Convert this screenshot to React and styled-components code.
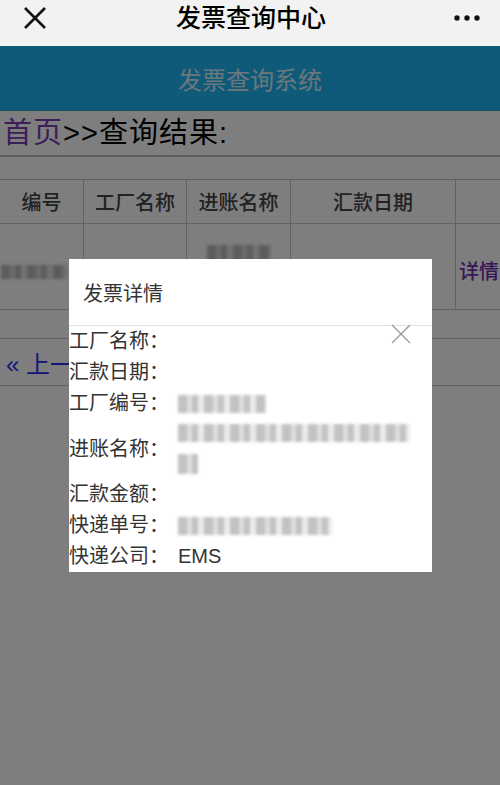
import React from 'react'
import styled, { createGlobalStyle } from 'styled-components'

const GlobalStyle = createGlobalStyle`
  body {
    margin: 0;
    background: #fff;
    font-family: "Liberation Sans", "Noto Sans CJK SC", sans-serif;
  }
`

const Screen = styled.div`
  width: 500px;
  height: 785px;
  overflow: hidden;
  display: flex;
  flex-direction: column;
`

const TopBar = styled.div`
  height: 46px;
  flex: none;
  background: #f2f2f2;
  display: flex;
  align-items: center;
  justify-content: space-between;
  padding: 0 18px 0 20px;
  box-sizing: border-box;
`

const TopTitle = styled.div`
  font-size: 25px;
  font-weight: 500;
  color: #000;
  line-height: 1;
  margin-top: -10px;
`

const IconBtn = styled.div`
  width: 30px;
  height: 30px;
  display: flex;
  align-items: center;
  justify-content: center;
  margin-top: -10px;
`

const Content = styled.div`
  position: relative;
  flex: 1;
  background: #fcfcfe;
`

const Banner = styled.div`
  height: 64px;
  background: #1cb4f0;
  border-bottom: 1px solid #2a9ccc;
  display: flex;
  align-items: center;
  justify-content: center;
  font-size: 24px;
  color: rgba(255, 255, 255, 0.82);
`

const Crumb = styled.div`
  font-size: 29px;
  letter-spacing: 1px;
  line-height: 44px;
  padding-left: 3px;
  color: #000;
  border-bottom: 2px solid #bcbcbc;
`

const CrumbLink = styled.span`
  color: ${p => p.color || '#7a3cb4'};
`

const Table = styled.table`
  margin-top: 22px;
  width: 520px;
  border-collapse: collapse;
  table-layout: fixed;
  font-size: 20px;
`

const Th = styled.th`
  width: ${p => p.w}px;
  height: 43px;
  border: 1px solid #c4c4c4;
  border-left: ${p => (p.first ? 'none' : '1px solid #c4c4c4')};
  color: #444;
  font-weight: 500;
  padding: 0;
  text-align: center;
`

const Td = styled.td`
  height: 85px;
  border: 1px solid #c4c4c4;
  border-left: ${p => (p.first ? 'none' : '1px solid #c4c4c4')};
  padding: 0;
  text-align: center;
  vertical-align: middle;
`

const DetailLink = styled.span`
  display: block;
  text-align: left;
  padding-left: 3px;
  color: #6e2fb0;
  font-weight: 500;
  margin-top: 8px;
`

const Blur = styled.div`
  display: inline-block;
  vertical-align: middle;
  width: ${p => p.w}px;
  height: ${p => p.h || 16}px;
  background: repeating-linear-gradient(
    90deg,
    ${p => p.c1 || '#b9b9b9'} 0 9px,
    ${p => p.c2 || '#d8d8d8'} 9px 14px,
    ${p => p.c1 || '#b9b9b9'} 14px 20px,
    ${p => p.c3 || '#e6e6e6'} 20px 26px
  );
  filter: blur(1.6px);
`

const Pager = styled.div`
  margin-top: 28px;
  height: 46px;
  border-top: 1px solid #c4c4c4;
  border-bottom: 1px solid #c4c4c4;
  display: flex;
  align-items: center;
  padding-left: 6px;
  font-size: 24px;
  color: #2a2af0;
`

const Overlay = styled.div`
  position: absolute;
  inset: 0;
  background: rgba(0, 0, 0, 0.5);
`

const Modal = styled.div`
  position: absolute;
  left: 69px;
  top: 213px;
  width: 363px;
  background: #fff;
`

const ModalHead = styled.div`
  height: 66px;
  border-bottom: 1px solid #e2e2e2;
  display: flex;
  align-items: center;
  padding-left: 14px;
  font-size: 20px;
  color: #333;
`

const Close = styled.div`
  position: absolute;
  right: 21px;
  top: 65px;
  width: 20px;
  height: 20px;
`

const Row = styled.div`
  display: flex;
  align-items: center;
  min-height: 31px;
  font-size: 20px;
  line-height: 31px;
  color: #333;
`

const Label = styled.span`
  flex: none;
  width: 109px;
`

const Value = styled.div`
  display: flex;
  flex-direction: column;
  gap: 12px;
  padding: ${p => (p.multi ? '5px 0' : '0')};
`

const fields = [
  { label: '工厂名称：' },
  { label: '汇款日期：' },
  { label: '工厂编号：', blur: [88] },
  { label: '进账名称：', blur: [232, 20], multi: true },
  { label: '汇款金额：' },
  { label: '快递单号：', blur: [154] },
  { label: '快递公司：', text: 'EMS' },
]

const App = () => {
  return (
    <Screen>
      <GlobalStyle />
      <TopBar>
        <IconBtn>
          <svg width="24" height="24" viewBox="0 0 24 24">
            <path d="M2 2 L22 22 M22 2 L2 22" stroke="#111" strokeWidth="2.6" />
          </svg>
        </IconBtn>
        <TopTitle>发票查询中心</TopTitle>
        <IconBtn>
          <svg width="28" height="8" viewBox="0 0 28 8">
            <circle cx="4" cy="4" r="2.7" fill="#111" />
            <circle cx="14" cy="4" r="2.7" fill="#111" />
            <circle cx="24" cy="4" r="2.7" fill="#111" />
          </svg>
        </IconBtn>
      </TopBar>

      <Content>
        <Banner>发票查询系统</Banner>
        <Crumb>
          <CrumbLink>首页</CrumbLink>&gt;&gt;查询结果:
        </Crumb>

        <Table>
          <thead>
            <tr>
              <Th w={83} first>编号</Th>
              <Th w={102}>工厂名称</Th>
              <Th w={103}>进账名称</Th>
              <Th w={164}>汇款日期</Th>
              <Th w={68}></Th>
            </tr>
          </thead>
          <tbody>
            <tr>
              <Td first>
                <Blur w={66} h={14} style={{ marginTop: 10, marginLeft: -16 }} />
              </Td>
              <Td></Td>
              <Td>
                <Blur w={64} h={18} style={{ marginTop: -28 }} />
              </Td>
              <Td></Td>
              <Td>
                <DetailLink>详情</DetailLink>
              </Td>
            </tr>
          </tbody>
        </Table>

        <Pager>« 上一页</Pager>

        <Overlay />

        <Modal>
          <ModalHead>发票详情</ModalHead>
          <Close>
            <svg width="20" height="20" viewBox="0 0 20 20">
              <path d="M1 1 L19 19 M19 1 L1 19" stroke="#9a9a9a" strokeWidth="1.3" />
            </svg>
          </Close>
          {fields.map(f => (
            <Row key={f.label}>
              <Label>{f.label}</Label>
              <Value multi={f.multi}>
                {f.text}
                {f.blur &&
                  f.blur.map((w, i) => <Blur key={i} w={w} h={i ? 20 : 18} c1="#c2c2c2" c2="#dedede" c3="#ececec" />)}
              </Value>
            </Row>
          ))}
        </Modal>
      </Content>
    </Screen>
  )
}

export default App
